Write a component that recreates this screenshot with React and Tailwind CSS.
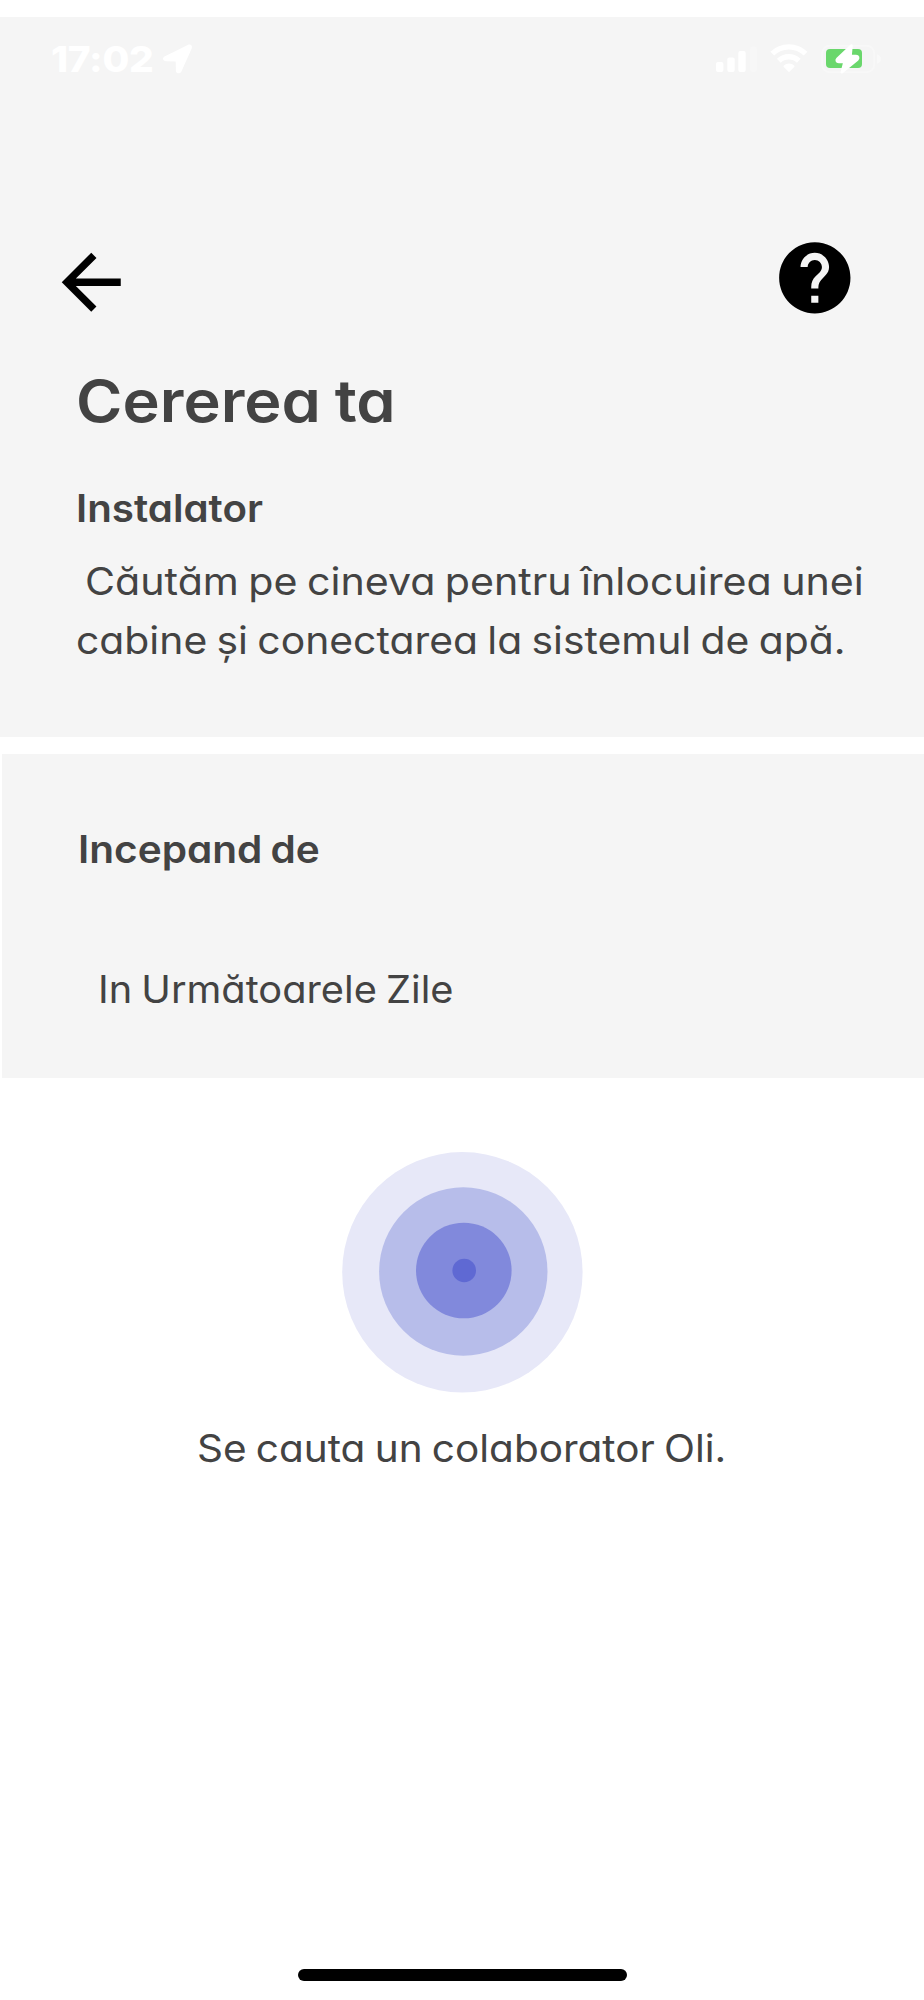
import React from 'react';

function LocationArrow() {
  return (
    <svg className="mt-[5px]" width="31" height="31" viewBox="0 0 31 31" fill="white">
      <path d="M3 12.2L25.8 1c3-1.3 5 .8 3.8 3.8L19.4 27.6c-1.1 2.6-5.4 2.3-5.5-.9l-.2-9.3-9.6-.2C.4 17 0 13.6 3 12.2z" />
    </svg>
  );
}

function StatusIcons() {
  return (
    <svg className="mt-[2px]" width="168" height="34" viewBox="0 0 168 34" fill="none">
      <g fill="white">
        <rect x="2" y="21" width="7.4" height="10" rx="2" />
        <rect x="13.3" y="16.5" width="7.4" height="14.5" rx="2" />
        <rect x="24.3" y="10" width="7.4" height="21" rx="2" />
        <rect x="36" y="5.5" width="7" height="25.5" rx="2" opacity="0.2" />
        <path d="M75 31.2l5.2-5.3c.4-.4.4-.9 0-1.3a7.5 7.5 0 0 0-10.4 0c-.4.4-.4.9 0 1.3z" />
      </g>
      <path d="M58.2 12.6a24 24 0 0 1 33.4 0" stroke="white" strokeWidth="5.4" />
      <path d="M64.8 19.8a14.3 14.3 0 0 1 20 0" stroke="white" strokeWidth="5.4" />
      <rect x="108.2" y="4.8" width="52" height="26.4" rx="7.5" stroke="white" strokeWidth="2" opacity="0.3" />
      <path d="M163 13.2c2.6.9 4 2.6 4 4.8s-1.4 3.9-4 4.8z" fill="white" opacity="0.4" />
      <rect x="112" y="8" width="36" height="19" rx="4" fill="#6ad76c" />
      <path
        d="M137.5 4.5L123.5 17.6c-1.5 1.6-.8 3.4 1.2 3.4h5.8l-2.7 10.3 15.4-12.6c1.7-1.6 1-3.7-1.2-3.7h-5.5z"
        fill="white"
        stroke="white"
        strokeWidth="2.6"
        strokeLinejoin="round"
      />
    </svg>
  );
}

function BackIcon() {
  return (
    <svg className="mt-[4px] h-[88.5px] w-[88.5px]" viewBox="0 0 24 24" fill="black">
      <path d="M20 11H7.83l5.59-5.59L12 4l-8 8 8 8 1.41-1.41L7.83 13H20v-2z" />
    </svg>
  );
}

function HelpIcon() {
  return (
    <svg className="mt-px h-[85.6px] w-[85.6px]" viewBox="0 0 24 24" fill="black">
      <path d="M12 2C6.48 2 2 6.48 2 12s4.48 10 10 10 10-4.48 10-10S17.52 2 12 2zm1 17h-2v-2h2v2zm2.07-7.75l-.9.92C13.45 12.9 13 13.5 13 15h-2v-.5c0-1.1.45-2.1 1.17-2.83l1.24-1.26c.37-.36.59-.86.59-1.41 0-1.1-.9-2-2-2s-2 .9-2 2H8c0-2.21 1.79-4 4-4s4 1.79 4 4c0 .88-.36 1.68-.93 2.25z" />
    </svg>
  );
}

function SearchPulse() {
  return (
    <svg className="ml-[342px] mt-[74px] shrink-0" width="241" height="241" viewBox="0 0 241 241">
      <circle cx="120.4" cy="120.3" r="120.2" fill="#e7e8f8" />
      <circle cx="121.3" cy="119.5" r="84.2" fill="#b7bdea" />
      <circle cx="121.8" cy="118.5" r="47.8" fill="#8189dc" />
      <circle cx="122.2" cy="118.5" r="11.8" fill="#5f69d3" />
    </svg>
  );
}

export default function App() {
  return (
    <div className="flex h-[2000px] w-[924px] flex-col overflow-hidden whitespace-nowrap bg-white pt-[17px] font-['Inter',sans-serif] text-[38px] leading-[48px] text-[#434343] [font-feature-settings:'cv11'] [word-spacing:-2px]">
      <section className="h-[720px] shrink-0 bg-[#f5f5f5] pt-[22px]">
        <div className="flex h-[40px] items-start pl-[51px] pr-[42px] text-white">
          <span className="w-[111px] origin-left scale-x-[1.08] text-[36px] font-extrabold leading-[40px] tracking-[-0.3px]">
            17:02
          </span>
          <LocationArrow />
          <div className="ml-auto">
            <StatusIcons />
          </div>
        </div>

        <nav className="mt-[155px] flex h-[93px] items-start justify-between pl-[47px] pr-[66px]">
          <button type="button" aria-label="Înapoi">
            <BackIcon />
          </button>
          <button type="button" aria-label="Ajutor">
            <HelpIcon />
          </button>
        </nav>

        <div className="pl-[76px]">
          <h1 className="mt-[39px] origin-left scale-x-[1.087] text-[58px] font-semibold leading-[70px]">Cererea ta</h1>
          <h2 className="mt-[48px] origin-left scale-x-[1.06] font-semibold">Instalator</h2>
          <p className="mt-[20px] leading-[59px]">
            <span className="ml-[9px] block origin-left scale-x-[1.083]">Căutăm pe cineva pentru înlocuirea unei</span>
            <span className="block origin-left scale-x-[1.075]">cabine și conectarea la sistemul de apă.</span>
          </p>
        </div>
      </section>

      <section className="ml-[2px] mt-[17px] h-[324px] shrink-0 bg-[#f5f5f5] pl-[76px] pt-[71px]">
        <h2 className="origin-left scale-x-[1.067] font-semibold">Incepand de</h2>
        <p className="ml-[20px] mt-[92px] origin-left scale-x-[1.047]">In Următoarele Zile</p>
      </section>

      <SearchPulse />
      <p className="ml-[197px] mt-[31px] origin-left scale-x-[1.066]">Se cauta un colaborator Oli.</p>

      <div className="mb-[19px] ml-[298px] mt-auto h-[12px] w-[329px] rounded-full bg-black" />
    </div>
  );
}
